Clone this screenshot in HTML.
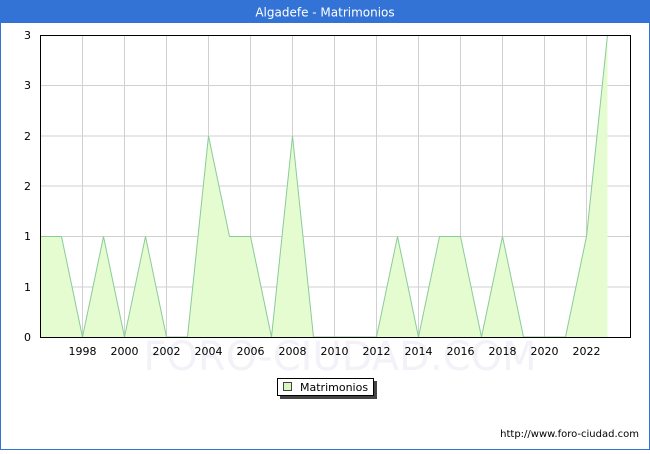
<!DOCTYPE html>
<html><head><meta charset="utf-8"><style>
body{margin:0;width:650px;height:450px;overflow:hidden;background:#fff;font-family:"DejaVu Sans","Liberation Sans",sans-serif}
</style></head><body>
<svg width="650" height="450" xmlns="http://www.w3.org/2000/svg" font-family="DejaVu Sans, Liberation Sans, sans-serif">
<rect x="0.5" y="0.5" width="649" height="449" fill="#fff" stroke="#3373d6"/>
<rect x="0" y="0" width="650" height="23" fill="#3373d6"/>
<text x="325" y="16.5" fill="#fff" font-size="12" text-anchor="middle">Algadefe - Matrimonios</text>
<text x="340" y="370" fill="#f2f2f8" font-size="40" text-anchor="middle">FORO-CIUDAD.COM</text>
<g stroke="#d0d0d0" stroke-width="1">
<line x1="40" y1="287" x2="631" y2="287"/><line x1="40" y1="236.5" x2="631" y2="236.5"/><line x1="40" y1="186" x2="631" y2="186"/><line x1="40" y1="136" x2="631" y2="136"/><line x1="40" y1="85.5" x2="631" y2="85.5"/>
<line x1="82.5" y1="35" x2="82.5" y2="337"/><line x1="124.5" y1="35" x2="124.5" y2="337"/><line x1="166.5" y1="35" x2="166.5" y2="337"/><line x1="208.5" y1="35" x2="208.5" y2="337"/><line x1="250.5" y1="35" x2="250.5" y2="337"/><line x1="292.5" y1="35" x2="292.5" y2="337"/><line x1="334.5" y1="35" x2="334.5" y2="337"/><line x1="376.5" y1="35" x2="376.5" y2="337"/><line x1="418.5" y1="35" x2="418.5" y2="337"/><line x1="460.5" y1="35" x2="460.5" y2="337"/><line x1="502.5" y1="35" x2="502.5" y2="337"/><line x1="544.5" y1="35" x2="544.5" y2="337"/><line x1="586.5" y1="35" x2="586.5" y2="337"/>
</g>
<path d="M40.5,337 L40.5,236.5 L61.5,236.5 L82.5,337 L103.5,236.5 L124.5,337 L145.5,236.5 L166.5,337 L187.5,337 L208.5,136 L229.5,236.5 L250.5,236.5 L271.5,337 L292.5,136 L313.5,337 L376.5,337 L397.5,236.5 L418.5,337 L439.5,236.5 L460.5,236.5 L481.5,337 L502.5,236.5 L523.5,337 L565.5,337 L586.5,236.5 L607.5,35 L607.5,337 Z" fill="#e4fcd0"/>
<path d="M40.5,236.5 L61.5,236.5 L82.5,337 L103.5,236.5 L124.5,337 L145.5,236.5 L166.5,337 L187.5,337 L208.5,136 L229.5,236.5 L250.5,236.5 L271.5,337 L292.5,136 L313.5,337 L376.5,337 L397.5,236.5 L418.5,337 L439.5,236.5 L460.5,236.5 L481.5,337 L502.5,236.5 L523.5,337 L565.5,337 L586.5,236.5 L607.5,35" fill="none" stroke="#8acb9a" stroke-width="1"/>
<rect x="40.5" y="35.5" width="590" height="302" fill="none" stroke="#000" stroke-width="1"/>
<g font-size="11" fill="#000" text-anchor="end">
<text x="31" y="341">0</text><text x="31" y="291">1</text><text x="31" y="240">1</text><text x="31" y="190">2</text><text x="31" y="140">2</text><text x="31" y="89">3</text><text x="31" y="39">3</text>
</g>
<g font-size="11" fill="#000" text-anchor="middle">
<text x="82.5" y="355">1998</text><text x="124.5" y="355">2000</text><text x="166.5" y="355">2002</text><text x="208.5" y="355">2004</text><text x="250.5" y="355">2006</text><text x="292.5" y="355">2008</text><text x="334.5" y="355">2010</text><text x="376.5" y="355">2012</text><text x="418.5" y="355">2014</text><text x="460.5" y="355">2016</text><text x="502.5" y="355">2018</text><text x="544.5" y="355">2020</text><text x="586.5" y="355">2022</text>
</g>
<rect x="280" y="381" width="97" height="18" fill="#444"/>
<rect x="277.5" y="378.5" width="96" height="17" fill="#fff" stroke="#000"/>
<rect x="283.5" y="382.5" width="8" height="8" fill="#d8f8c0" stroke="#444"/>
<text x="300" y="391" font-size="11" fill="#000">Matrimonios</text>
<text x="639" y="437" font-size="10" fill="#000" text-anchor="end">http://www.foro-ciudad.com</text>
</svg>
</body></html>
